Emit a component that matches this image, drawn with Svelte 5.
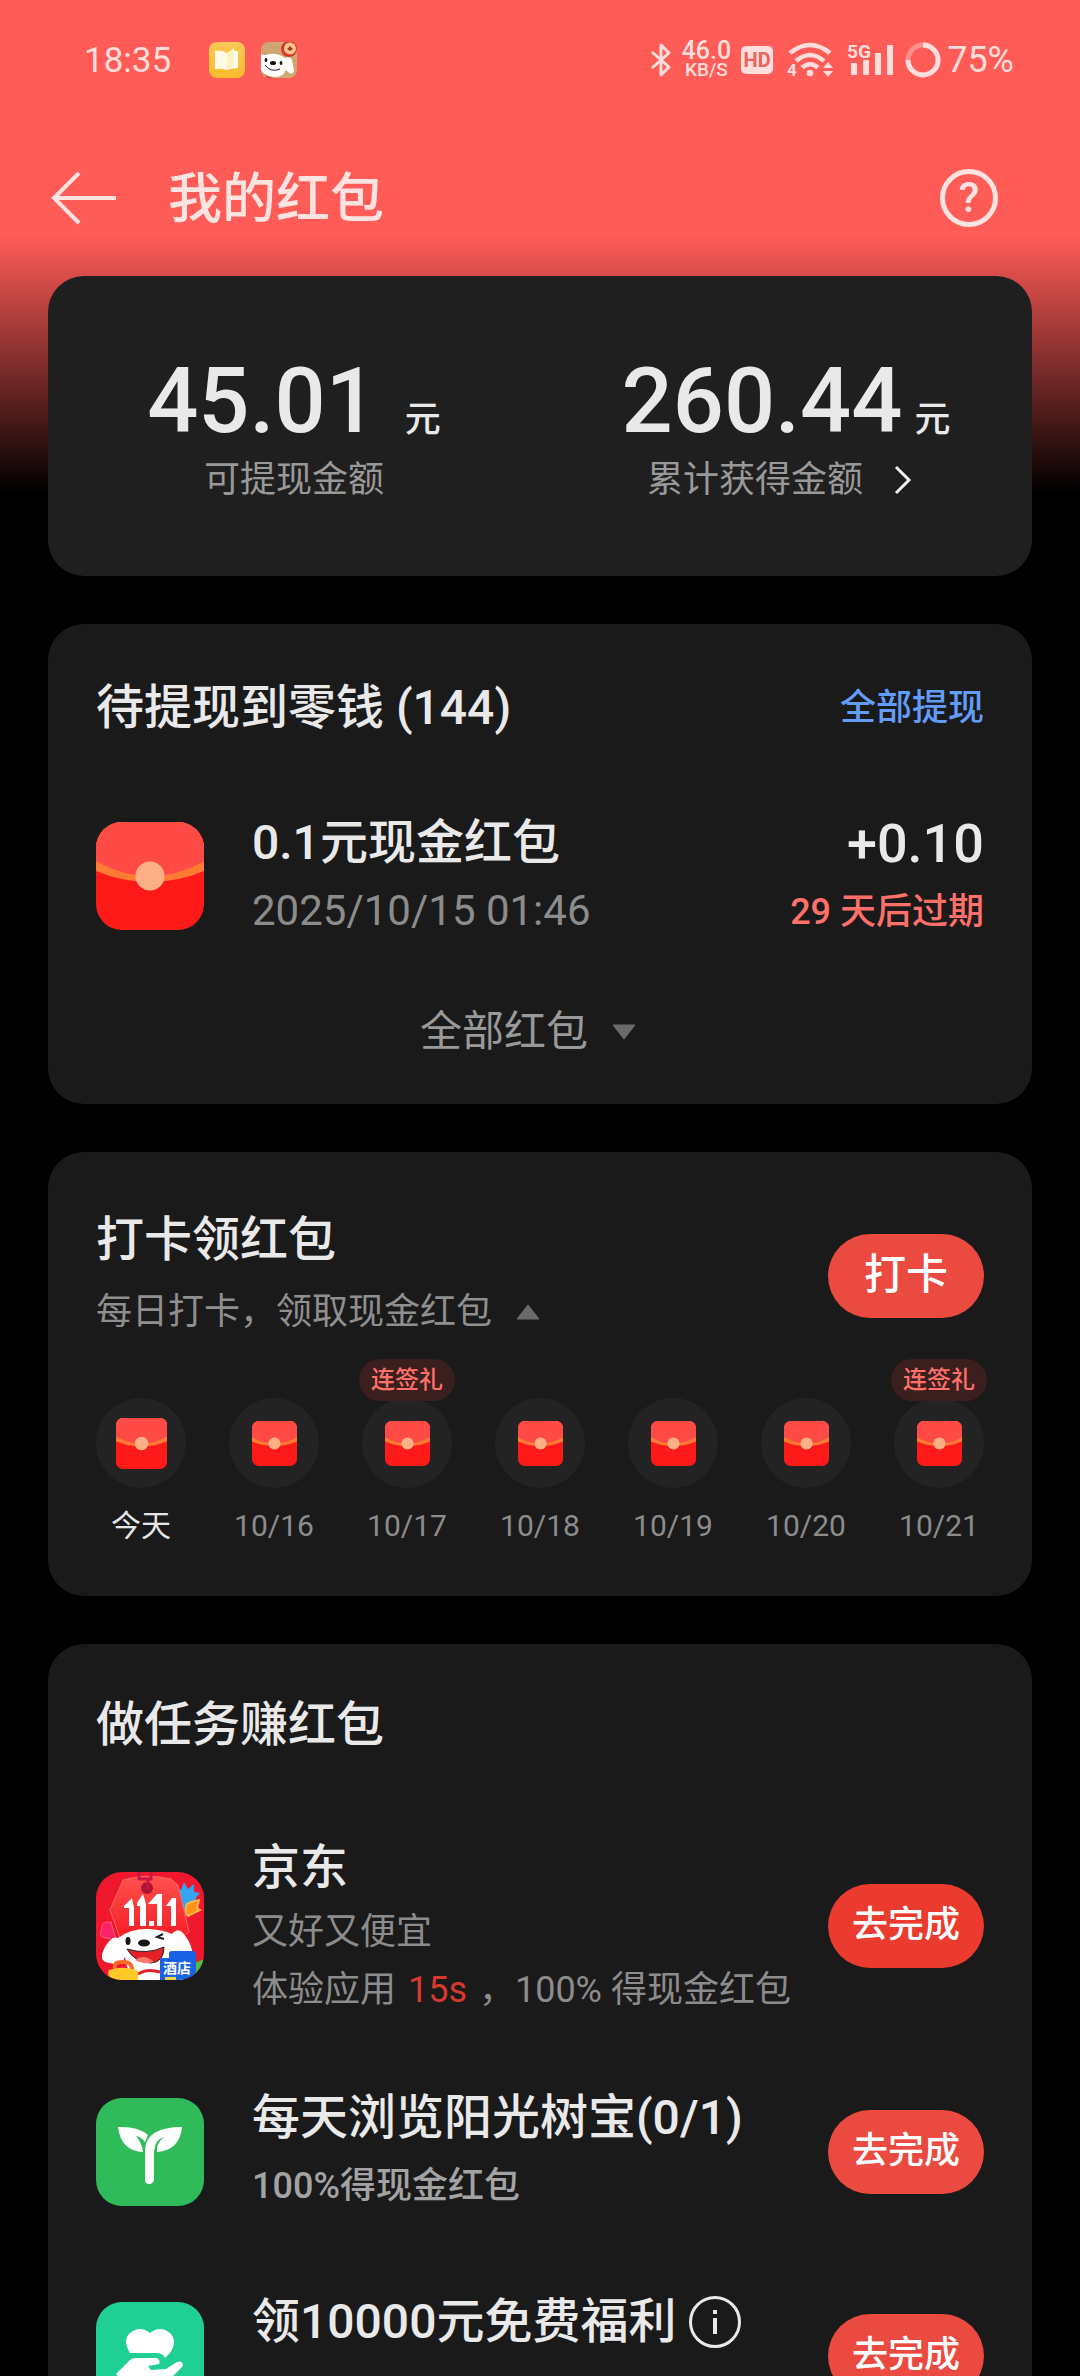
<script lang="ts">
  const days = [
    { label: '今天', today: true, gift: false },
    { label: '10/16', today: false, gift: false },
    { label: '10/17', today: false, gift: true },
    { label: '10/18', today: false, gift: false },
    { label: '10/19', today: false, gift: false },
    { label: '10/20', today: false, gift: false },
    { label: '10/21', today: false, gift: true },
  ];
</script>

{#snippet envelope(cls: string)}
  <svg class="envelope {cls}" viewBox="0 0 108 108" aria-hidden="true">
    <rect width="108" height="108" fill="#ff1a1a" />
    <path d="M0 0H108V49Q82 60 54 60T0 49Z" fill="#ff7a32" />
    <path d="M0 0H108V39Q82 54 54 54T0 39Z" fill="#ff4a46" />
    <circle cx="54" cy="54" r="14.5" fill="#fdb085" />
  </svg>
{/snippet}

<div class="screen">
  <div class="statusbar">
    <span class="time">18:35</span>
    <svg class="app-mini" viewBox="0 0 36 36" aria-hidden="true">
      <defs>
        <linearGradient id="gold" x1="0" y1="0" x2="0" y2="1">
          <stop offset="0" stop-color="#fac858" />
          <stop offset="1" stop-color="#f8bc2c" />
        </linearGradient>
      </defs>
      <rect width="36" height="36" rx="8" fill="url(#gold)" />
      <path d="M6 9Q12 8 18 11V28Q12 26 6 27Z" fill="#fffbe8" />
      <path d="M18 11L25 6V23L18 28Z" fill="#fff3c4" />
      <path d="M25 9H29V26Q23 26 18 28L25 23Z" fill="#fffdf2" />
    </svg>
    <svg class="app-mini dog" viewBox="0 0 36 36" aria-hidden="true">
      <rect width="36" height="36" rx="8" fill="#cda672" />
      <path d="M0 12Q4 14 8 12Q17 11 24 16Q29 13 31 18L33 29Q32 33 28 31Q26 29 25 28Q22 36 12 35Q2 33 0 28Z" fill="#fffdfa" />
      <path d="M4 33Q8 36 13 35L10 36H6Z" fill="#d3362a" />
      <path d="M4 23Q10 31 19 27" fill="none" stroke="#222" />
      <ellipse cx="12" cy="21" rx="3" ry="2" fill="#111" />
      <ellipse cx="5" cy="18" rx="1.4" ry="2" fill="#111" />
      <ellipse cx="20" cy="21" rx="1.4" ry="2" fill="#111" />
      <circle cx="28" cy="7" r="8" fill="#d8392b" />
      <circle cx="29" cy="6.500" r="6" fill="#fbc590" />
      <path d="M29 4L32 7L29 9L26 7Z" fill="#a33b2b" />
    </svg>
    <div class="indicators">
      <svg width="22" height="36" viewBox="0 0 22 36" aria-hidden="true">
        <path d="M2 10L19 25L11 33V3L19 11L2 26" fill="none" stroke="currentColor" stroke-width="3" stroke-linejoin="round" />
      </svg>
      <div class="speed"><span class="rate">46.0</span><span class="unit">KB/S</span></div>
      <span class="hd">HD</span>
      <svg width="54" height="36" viewBox="-4 0 54 36" aria-hidden="true">
        <g fill="none" stroke="currentColor" stroke-width="4.500">
          <path d="M3 11Q23 -5 43 11" />
          <path d="M9 19Q23 7 37 19" />
          <path d="M15 25.500Q23 19 31 25.500" />
        </g>
        <circle cx="23" cy="31" r="3.300" fill="currentColor" />
        <path d="M41 20L46 26H36ZM41 35L36 29H46Z" fill="currentColor" />
        <text x="0" y="34" font-size="17" font-weight="700" fill="currentColor">4</text>
      </svg>
      <svg width="48" height="36" viewBox="0 0 48 36" aria-hidden="true">
        <g fill="currentColor">
          <rect x="4" y="21" width="6" height="12" rx="1" />
          <rect x="16" y="18" width="6" height="15" rx="1" />
          <rect x="28" y="11" width="6" height="22" rx="1" />
          <rect x="40" y="3" width="6" height="30" rx="1" />
          <text x="0" y="16" font-size="19" font-weight="700">5G</text>
        </g>
      </svg>
      <div class="charge">
        <svg width="36" height="36" viewBox="0 0 36 36" aria-hidden="true">
          <g fill="none" stroke="currentColor" stroke-width="5">
            <circle cx="18" cy="18" r="15" opacity="0.4" />
            <path d="M18 3A15 15 0 1 1 3 18" />
          </g>
        </svg>
        <span class="battery">75%</span>
      </div>
    </div>
  </div>

  <header class="topbar">
    <button class="back" aria-label="返回">
      <svg width="66" height="54" viewBox="0 0 66 54" aria-hidden="true">
        <path d="M65 27H3M28 2L3 27L28 52" fill="none" stroke="currentColor" stroke-width="4" />
      </svg>
    </button>
    <h1>我的红包</h1>
    <button class="help" aria-label="帮助">?</button>
  </header>

  <main>
    <section class="card balance">
      <div class="figure wide">
        <p class="sum"><strong>45.01</strong><span>元</span></p>
        <p class="caption">可提现金额</p>
      </div>
      <div class="figure">
        <p class="sum"><strong>260.44</strong><span>元</span></p>
        <a class="caption" href="#total">
          累计获得金额
          <svg width="36" height="30" viewBox="0 0 36 30" aria-hidden="true">
            <path d="M7 2L20 15L7 28" fill="none" stroke="#f2f2f2" stroke-width="3" />
          </svg>
        </a>
      </div>
    </section>

    <section class="card pending">
      <div class="card-head">
        <h2>待提现到零钱 (144)</h2>
        <a class="withdraw" href="#withdraw">全部提现</a>
      </div>
      <div class="packet">
        {@render envelope('large')}
        <div class="info">
          <h3>0.1元现金红包</h3>
          <p class="date">2025/10/15 01:46</p>
        </div>
        <div class="value">
          <p class="plus">+0.10</p>
          <p class="expire">29 天后过期</p>
        </div>
      </div>
      <button class="more">
        全部红包
        <svg width="24" height="16" viewBox="0 0 24 16" aria-hidden="true">
          <path d="M1 1H23L12 15Z" fill="#6b6b6b" stroke="#6b6b6b" stroke-linejoin="round" />
        </svg>
      </button>
    </section>

    <section class="card checkin">
      <div class="checkin-head">
        <div>
          <h2>打卡领红包</h2>
          <p class="hint">
            每日打卡，领取现金红包
            <svg width="24" height="16" viewBox="0 0 24 16" aria-hidden="true">
              <path d="M1 15H23L12 1Z" fill="#6b6b6b" stroke="#6b6b6b" stroke-linejoin="round" />
            </svg>
          </p>
        </div>
        <button class="pill big">打卡</button>
      </div>
      <ul class="days">
        {#each days as day}
          <li>
            <div class="disc">
              {@render envelope(day.today ? 'medium' : 'small')}
              {#if day.gift}<span class="gift">连签礼</span>{/if}
            </div>
            <span class="day" class:today={day.today}>{day.label}</span>
          </li>
        {/each}
      </ul>
    </section>

    <section class="card tasks">
      <h2>做任务赚红包</h2>
      <ul>
        <li class="task detailed">
          <svg class="app" viewBox="0 0 108 108" aria-hidden="true">
            <defs>
              <pattern id="check" width="14" height="14" patternUnits="userSpaceOnUse">
                <rect width="14" height="14" fill="#f5142c" />
                <path d="M0 0H7V7H0ZM7 7H14V14H7Z" fill="#e91a2e" />
              </pattern>
              <linearGradient id="tag" x1="0" y1="0" x2="0" y2="1">
                <stop offset="0" stop-color="#ff514e" />
                <stop offset="1" stop-color="#f51d24" />
              </linearGradient>
            </defs>
            <rect width="108" height="108" fill="url(#check)" />
            <path d="M80 15L85 18L88 10L92 17L98 12V20L104 21L99 27L103 31L97 33V40L82 36Z" fill="#35a5f2" />
            <path d="M95 30L103 28L101 36L104 38L92 44L89 40L91 32Z" fill="#ff9214" stroke="#ffb54e" stroke-width="2" />
            <path d="M15 50Q4 49 6 57Q1 65 10 66L20 68Z" fill="#fc2369" stroke="#ff5b81" />
            <path d="M27 8Q50 1 75 7L82 13L93 60L84 66H24L14 38Z" fill="url(#tag)" stroke="#ff6560" />
            <circle cx="51" cy="16" r="6" fill="#b01335" />
            <path d="M43 0V7H55V0M52 7V17" fill="none" stroke="#c91643" stroke-width="3" />
            <path d="M28 34L36 26L38 36V54H33V36H28ZM41 31L47 22L50 32V54H44V34H41ZM52 32L61 22H66V54H61V32ZM70 34L76 26H80V54H75V34ZM53 49H58V54H53Z" fill="#fff" />
            <path d="M22 66Q35 56 53 57Q68 58 76 62Q82 55 87 61Q98 74 97 88H87V108H36Q31 98 29 85Q25 95 14 91Q1 90 9 75Q16 63 22 66Z" fill="#fff" />
            <ellipse cx="32" cy="69" rx="2.500" ry="4" fill="#191919" />
            <ellipse cx="48" cy="71" rx="6" ry="3.500" fill="#171717" />
            <path d="M67 62L61 65L68 67" fill="none" stroke="#222" stroke-width="2" />
            <path d="M31 77Q51 83 68 75Q68 90 55 91Q38 90 31 77Z" fill="#e32127" stroke="#222" />
            <path d="M39 88Q48 81 58 90Q47 93 39 88Z" fill="#ff756f" />
            <path d="M42 102Q51 96 64 100" fill="none" stroke="#e4202b" stroke-width="3" />
            <path d="M19 97Q17 90 26 90Q36 89 36 98" fill="none" stroke="#ff6828" stroke-width="4" />
            <path d="M13 98Q28 93 42 99V108H17Q10 104 13 98Z" fill="#ffc827" />
            <path d="M99 91L108 87V108H96Z" fill="#51bc43" />
            <path d="M64 86H73V81Q73 79 76 79H97Q100 79 100 82V108H64Z" fill="#1862e6" />
            <rect x="69" y="105" width="11" height="3" fill="#f9d33e" />
            <text x="67" y="101" font-size="14" font-weight="700" fill="#fff">酒店</text>
          </svg>
          <div class="info">
            <h3>京东</h3>
            <p>又好又便宜</p>
            <p>体验应用 <em>15s</em> ，100% 得现金红包</p>
          </div>
          <button class="pill vivid">去完成</button>
        </li>
        <li class="task">
          <svg class="app" viewBox="0 0 108 108" aria-hidden="true">
            <rect width="108" height="108" fill="#2fbb59" />
            <path d="M22 29Q42 28 52 37L49 44Q45 39 40 38Q46 45 47 54Q25 53 22 29Z" fill="#fff" />
            <path d="M49 82V52Q50 29 86 29Q84 52 61 54Q60 45 68 39Q59 41 58 54V82Q57 86 53 86Q49 86 49 82Z" fill="#fff" />
          </svg>
          <div class="info">
            <h3>每天浏览阳光树宝(0/1)</h3>
            <p class="strong">100%得现金红包</p>
          </div>
          <button class="pill">去完成</button>
        </li>
        <li class="task">
          <svg class="app" viewBox="0 0 108 108" aria-hidden="true">
            <rect width="108" height="108" fill="#1fcf94" />
            <path d="M34 51Q26 38 34 31Q44 23 54 31Q64 23 74 31Q82 39 74 51L69 56Q67 51 60 51Z" fill="#fff" />
            <path d="M20 72L34 58Q36 56 40 56H61Q65 58 63 62L52 64L55 68L70 67L81 60Q87 58 87 64L70 81Q68 83 62 83H38L33 88Z" fill="#fff" />
          </svg>
          <div class="info">
            <h3>
              领10000元免费福利
              <svg width="54" height="54" viewBox="0 0 54 54" aria-hidden="true">
                <circle cx="27" cy="27" r="24.500" fill="none" stroke="currentColor" stroke-width="3" />
                <path d="M27 15V19M27 23V39" stroke="currentColor" stroke-width="4" />
              </svg>
            </h3>
          </div>
          <button class="pill">去完成</button>
        </li>
      </ul>
    </section>
  </main>
</div>

<style>
  :global(body) {
    margin: 0;
    background: #000;
  }
  .screen {
    box-sizing: border-box;
    height: 100vh;
    overflow-y: auto;
    scrollbar-width: none;
    background: linear-gradient(#ff5b57 0, #ff5b57 236px, #000 492px);
    color: #e9e9e9;
    font-family: Roboto, 'Noto Sans CJK SC', sans-serif;
  }
  h1, h2, h3, p, ul {
    margin: 0;
    padding: 0;
  }
  ul {
    list-style: none;
  }
  h1, h2, h3 {
    font-weight: 500;
  }
  button {
    padding: 0;
    border: 0;
    background: none;
    color: inherit;
    font: inherit;
    cursor: pointer;
  }
  a {
    text-decoration: none;
  }
  svg {
    display: block;
    flex: none;
  }

  .statusbar {
    display: flex;
    align-items: center;
    height: 120px;
    padding: 0 66px 0 84px;
    color: #ffdedc;
  }
  .time {
    margin-right: 38px;
    font-size: 35px;
  }
  .app-mini {
    width: 36px;
    height: 36px;
  }
  .dog {
    margin-left: 16px;
  }
  .indicators {
    display: flex;
    align-items: center;
    gap: 10px;
    margin-left: auto;
  }
  .speed {
    display: flex;
    flex-direction: column;
    align-items: center;
    font-weight: 500;
  }
  .rate {
    font-size: 25px;
    line-height: 20px;
  }
  .unit {
    font-size: 19px;
    line-height: 18px;
  }
  .hd {
    width: 32px;
    border-radius: 5px;
    background: #ffdedc;
    color: #f0605d;
    font-size: 20px;
    font-weight: 700;
    line-height: 28px;
    text-align: center;
  }
  .charge {
    display: flex;
    align-items: center;
    gap: 6px;
  }
  .battery {
    font-size: 36px;
  }

  .topbar {
    display: flex;
    align-items: center;
    height: 156px;
    padding: 0 82px 0 51px;
    color: #ffe3e1;
  }
  h1 {
    margin-left: 51px;
    padding-top: 4px;
    font-size: 54px;
    line-height: 72px;
  }
  .help {
    box-sizing: border-box;
    width: 58px;
    height: 58px;
    margin-left: auto;
    border: 5px solid currentColor;
    border-radius: 50%;
    font-size: 42px;
    font-weight: 500;
    line-height: 48px;
  }

  main {
    display: flex;
    flex-direction: column;
    gap: 48px;
    padding: 0 48px;
  }
  .card {
    padding: 48px;
    border-radius: 36px;
    background: #1a1a1a;
  }
  h2 {
    font-size: 48px;
    line-height: 72px;
  }
  h3 {
    display: flex;
    align-items: center;
    gap: 12px;
    font-size: 48px;
    line-height: 66px;
    white-space: nowrap;
  }

  .balance {
    display: grid;
    grid-template-columns: 1fr 1fr;
    padding: 78px 0 72px;
    background: #1f1f1f;
  }
  .figure {
    display: flex;
    flex-direction: column;
    align-items: center;
    gap: 6px;
  }
  .sum {
    display: flex;
    align-items: baseline;
    gap: 12px;
    height: 96px;
    font-size: 36px;
    font-weight: 500;
    line-height: 96px;
  }
  .wide .sum {
    gap: 28px;
  }
  .sum strong {
    font-size: 90px;
    font-weight: 500;
  }
  .caption {
    display: flex;
    align-items: center;
    gap: 26px;
    color: #999;
    font-size: 36px;
    line-height: 48px;
  }

  .pending {
    display: flex;
    flex-direction: column;
    padding-bottom: 40px;
  }
  .card-head {
    display: flex;
    align-items: center;
    justify-content: space-between;
  }
  .withdraw {
    color: #629cf8;
    font-size: 36px;
    font-weight: 500;
    line-height: 72px;
  }
  .packet {
    display: flex;
    align-items: flex-start;
    margin: 66px 0 54px;
  }
  .envelope {
    border-radius: 7px;
  }
  .large {
    width: 108px;
    height: 108px;
    margin-top: 12px;
    border-radius: 26px;
  }
  .medium {
    width: 51px;
    height: 51px;
  }
  .small {
    width: 45px;
    height: 45px;
  }
  .info {
    flex: 1;
    min-width: 0;
    margin-left: 48px;
  }
  .date {
    color: #8c8c8c;
    font-size: 42px;
    line-height: 70px;
  }
  .value {
    font-weight: 500;
    text-align: right;
  }
  .plus {
    font-size: 54px;
    line-height: 68px;
  }
  .expire {
    color: #ff7068;
    font-size: 36px;
    line-height: 68px;
  }
  .more {
    display: flex;
    align-items: center;
    align-self: center;
    gap: 24px;
    padding-right: 24px;
    color: #999;
    font-size: 42px;
    line-height: 64px;
  }

  .checkin {
    padding: 52px 48px 50px;
  }
  .checkin-head {
    display: flex;
    align-items: center;
    justify-content: space-between;
  }
  .hint {
    display: flex;
    align-items: center;
    gap: 24px;
    color: #8f8f8f;
    font-size: 36px;
    line-height: 72px;
  }
  .pill {
    box-sizing: border-box;
    flex: none;
    width: 156px;
    height: 84px;
    padding-bottom: 2px;
    border-radius: 42px;
    background: #eb4a40;
    color: #fff;
    font-size: 36px;
    font-weight: 500;
    line-height: 82px;
  }
  .vivid {
    background: #eb3b2f;
  }
  .big {
    font-size: 42px;
  }
  .days {
    display: flex;
    justify-content: space-between;
    margin-top: 50px;
  }
  .days li {
    display: flex;
    flex-direction: column;
    align-items: center;
    gap: 18px;
    width: 90px;
  }
  .disc {
    position: relative;
    display: flex;
    align-items: center;
    justify-content: center;
    width: 90px;
    height: 90px;
    border-radius: 50%;
    background: #232323;
  }
  .gift {
    position: absolute;
    bottom: 87px;
    left: -3px;
    width: 96px;
    border-radius: 21px;
    background: #3a1f1e;
    color: #ff7068;
    font-size: 24px;
    font-weight: 500;
    line-height: 42px;
    text-align: center;
  }
  .day {
    color: #8c8c8c;
    font-size: 30px;
    line-height: 40px;
  }
  .today {
    color: #e6e6e6;
  }

  .tasks h2 {
    line-height: 66px;
  }
  .tasks ul {
    display: flex;
    flex-direction: column;
    gap: 68px;
    margin-top: 78px;
  }
  .task {
    display: flex;
    align-items: center;
  }
  .app {
    width: 108px;
    height: 108px;
    border-radius: 26px;
  }
  .task .info {
    min-height: 136px;
  }
  .task h3,
  .task p {
    line-height: 68px;
  }
  .task p {
    color: #8c8c8c;
    font-size: 36px;
    white-space: nowrap;
  }
  .task .strong {
    color: #a3a3a3;
    font-weight: 500;
  }
  .detailed h3,
  .detailed p {
    line-height: 64px;
  }
  .detailed p:last-child {
    line-height: 52px;
  }
  em {
    margin: 0 3px;
    color: #d8392e;
    font-style: normal;
  }
</style>
